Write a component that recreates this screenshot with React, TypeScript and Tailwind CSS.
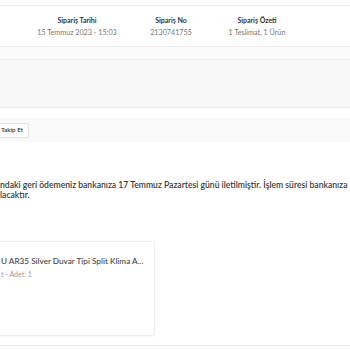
const summary = [
  { title: "Sipariş Tarihi", value: "15 Temmuz 2023 - 15:03", cls: "ml-[32px] w-[90px]" },
  { title: "Sipariş No", value: "2130741755", cls: "ml-[4px] w-[90px]" },
  { title: "Sipariş Özeti", value: "1 Teslimat, 1 Ürün", cls: "w-[82px]" },
];

export default function App() {
  return (
    <div className="flex h-[350px] w-[350px] flex-col overflow-hidden bg-white font-['Lato',sans-serif] text-[#333]">
      <div className="h-[5px] shrink-0 bg-white" />

      {/* sipariş özeti başlığı */}
      <div className="flex h-[42px] shrink-0 items-center border-y border-[#ececec] bg-white">
        {summary.map((s) => (
          <div key={s.title} className={`flex flex-col items-center gap-[3px] ${s.cls}`}>
            <p className="whitespace-nowrap text-[7px] font-bold leading-[9px] text-[#333]">{s.title}</p>
            <p className="whitespace-nowrap text-[7.2px] leading-[9px] text-[#777]">{s.value}</p>
          </div>
        ))}
      </div>

      <div className="h-[12px] shrink-0 bg-[#fbfbfb]" />
      <div className="h-[49px] shrink-0 border-y border-[#ececec] bg-[#f8f8f8]" />
      <div className="h-[10px] shrink-0 bg-white" />

      <div className="flex h-[24px] shrink-0 items-center bg-[#f9f9f9]">
        <button className="-ml-[5px] h-[15px] rounded-[2px] border border-[#e3e3e3] bg-white px-[5px] text-[6.3px] font-semibold leading-none text-[#333]">
          Takip Et
        </button>
      </div>

      <div className="mt-[38px] flex shrink-0 flex-col gap-0 text-[8.6px] font-semibold leading-[10px] text-[#3a3a3a]">
        <p className="whitespace-nowrap">
          ndaki geri ödemeniz bankanıza 17 Temmuz Pazartesi günü iletilmiştir. İşlem süresi bankanıza
        </p>
        <p className="whitespace-nowrap">lacaktır.</p>
      </div>

      <div className="mt-[41px] flex shrink-0">
        <div className="-ml-[60px] h-[95px] w-[215px] rounded-[3px] border border-[#eeeeee] bg-white pl-[60px] pt-[15px] shadow-[0_1px_2px_rgba(0,0,0,0.04)]">
          <p className="whitespace-nowrap text-[8.2px] font-medium leading-[9px] text-[#444]">
            U AR35 Silver Duvar Tipi Split Klima A...
          </p>
          <p className="mt-[4px] whitespace-nowrap text-[7px] leading-[8px] text-[#999]">t - Adet: 1</p>
        </div>
      </div>

      <div className="mt-[9px] shrink-0 border-t border-[#ececec]" />
    </div>
  );
}
